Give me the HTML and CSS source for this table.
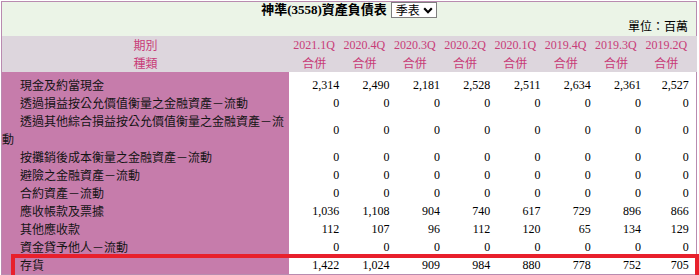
FILE: index.html
```html
<!DOCTYPE html>
<html lang="zh-Hant">
<head>
<meta charset="utf-8">
<title>神準(3558)資產負債表</title>
<link rel="stylesheet" href="styles.css">
</head>
<body>
<div class="sheet">
  <div class="caption">
    <div class="title-line">
      <span class="title">神準(3558)資產負債表</span>
      <span class="picker">季表<svg class="chev" width="10" height="7" viewBox="0 0 10 7"><path d="M1.2 1.3 L5 5.2 L8.8 1.3" fill="none" stroke="#000" stroke-width="2.2"/></svg></span>
    </div>
    <div class="unit">單位：百萬</div>
  </div>
  <table class="grid">
    <colgroup>
      <col class="c-label">
      <col class="c-num"><col class="c-num"><col class="c-num"><col class="c-num">
      <col class="c-num"><col class="c-num"><col class="c-num"><col class="c-last">
    </colgroup>
    <thead>
      <tr class="period">
        <th class="head-label">期別</th>
        <th>2021.1Q</th><th>2020.4Q</th><th>2020.3Q</th><th>2020.2Q</th>
        <th>2020.1Q</th><th>2019.4Q</th><th>2019.3Q</th><th>2019.2Q</th>
      </tr>
      <tr class="kind">
        <th class="head-label">種類</th>
        <th>合併</th><th>合併</th><th>合併</th><th>合併</th>
        <th>合併</th><th>合併</th><th>合併</th><th>合併</th>
      </tr>
    </thead>
    <tbody>
      <tr>
        <td class="label">現金及約當現金</td>
        <td class="num">2,314</td><td class="num">2,490</td><td class="num">2,181</td><td class="num">2,528</td>
        <td class="num">2,511</td><td class="num">2,634</td><td class="num">2,361</td><td class="num">2,527</td>
      </tr>
      <tr>
        <td class="label">透過損益按公允價值衡量之金融資產－流動</td>
        <td class="num">0</td><td class="num">0</td><td class="num">0</td><td class="num">0</td>
        <td class="num">0</td><td class="num">0</td><td class="num">0</td><td class="num">0</td>
      </tr>
      <tr>
        <td class="label">透過其他綜合損益按公允價值衡量之金融資產－流動</td>
        <td class="num">0</td><td class="num">0</td><td class="num">0</td><td class="num">0</td>
        <td class="num">0</td><td class="num">0</td><td class="num">0</td><td class="num">0</td>
      </tr>
      <tr>
        <td class="label">按攤銷後成本衡量之金融資產－流動</td>
        <td class="num">0</td><td class="num">0</td><td class="num">0</td><td class="num">0</td>
        <td class="num">0</td><td class="num">0</td><td class="num">0</td><td class="num">0</td>
      </tr>
      <tr>
        <td class="label">避險之金融資產－流動</td>
        <td class="num">0</td><td class="num">0</td><td class="num">0</td><td class="num">0</td>
        <td class="num">0</td><td class="num">0</td><td class="num">0</td><td class="num">0</td>
      </tr>
      <tr>
        <td class="label">合約資產－流動</td>
        <td class="num">0</td><td class="num">0</td><td class="num">0</td><td class="num">0</td>
        <td class="num">0</td><td class="num">0</td><td class="num">0</td><td class="num">0</td>
      </tr>
      <tr>
        <td class="label">應收帳款及票據</td>
        <td class="num">1,036</td><td class="num">1,108</td><td class="num">904</td><td class="num">740</td>
        <td class="num">617</td><td class="num">729</td><td class="num">896</td><td class="num">866</td>
      </tr>
      <tr>
        <td class="label">其他應收款</td>
        <td class="num">112</td><td class="num">107</td><td class="num">96</td><td class="num">112</td>
        <td class="num">120</td><td class="num">65</td><td class="num">134</td><td class="num">129</td>
      </tr>
      <tr>
        <td class="label">資金貸予他人－流動</td>
        <td class="num">0</td><td class="num">0</td><td class="num">0</td><td class="num">0</td>
        <td class="num">0</td><td class="num">0</td><td class="num">0</td><td class="num">0</td>
      </tr>
      <tr>
        <td class="label">存貨</td>
        <td class="num">1,422</td><td class="num">1,024</td><td class="num">909</td><td class="num">984</td>
        <td class="num">880</td><td class="num">778</td><td class="num">752</td><td class="num">705</td>
      </tr>
    </tbody>
  </table>
  <div class="highlight"></div>
</div>
</body>
</html>
```

FILE: styles.css
```css
html {
  overflow: hidden;
}

body {
  margin: 0;
  background: #ffffff;
  font-family: "Noto Sans CJK TC", "Noto Sans", sans-serif;
  color: #111111;
}

.sheet {
  position: relative;
  margin: 1px 0 0 1px;
  width: 694px;
  border: 1px solid #b98bb0;
}

.caption {
  background: #ebf4e7;
  height: 34px;
}

.title-line {
  display: flex;
  justify-content: center;
  align-items: center;
  gap: 4px;
  height: 16px;
}

.title {
  font-family: "Liberation Serif", "Noto Sans CJK TC", serif;
  font-weight: bold;
  font-size: 13px;
  line-height: 16px;
  color: #000000;
}

.picker {
  display: inline-flex;
  align-items: center;
  gap: 3px;
  height: 14px;
  padding: 0 3px 0 4px;
  border: 1px solid #7f7f7f;
  background: #ffffff;
  font-size: 12px;
  line-height: 14px;
  color: #000000;
}

.chev {
  display: block;
}

.unit {
  text-align: right;
  padding-right: 8px;
  font-size: 12px;
  line-height: 16px;
  color: #000000;
}

.grid {
  width: 694px;
  table-layout: fixed;
  border-collapse: collapse;
}

.c-label {
  width: 287px;
}

.c-num {
  width: 50.3px;
}

.c-last {
  width: 55.6px;
}

.grid th,
.grid td {
  padding: 0;
  font-size: 12px;
  line-height: 18px;
  font-weight: normal;
}

.grid thead {
  background: #ddd6dd;
}

.grid thead th {
  text-align: center;
  color: #c83c78;
}

.period th {
  font-family: "Liberation Serif", "Noto Sans CJK TC", serif;
}

.grid thead th.head-label {
  font-family: "Noto Sans CJK TC", sans-serif;
}

.grid thead th:last-child {
  padding-right: 5px;
}

.label {
  background: #c67cab;
  padding: 0 2px;
  text-indent: 18px;
  text-align: left;
  color: #141414;
}

.num {
  text-align: right;
  padding-right: 3px;
  font-family: "Liberation Serif", serif;
  color: #000000;
  vertical-align: middle;
}

.grid td.num:last-child {
  padding-right: 8px;
}

.grid tbody tr:first-child td {
  padding-top: 4px;
}

.highlight {
  position: absolute;
  left: 9px;
  top: 252px;
  width: 688px;
  height: 26px;
  box-sizing: border-box;
  border: 4px solid #e8202c;
}
```
